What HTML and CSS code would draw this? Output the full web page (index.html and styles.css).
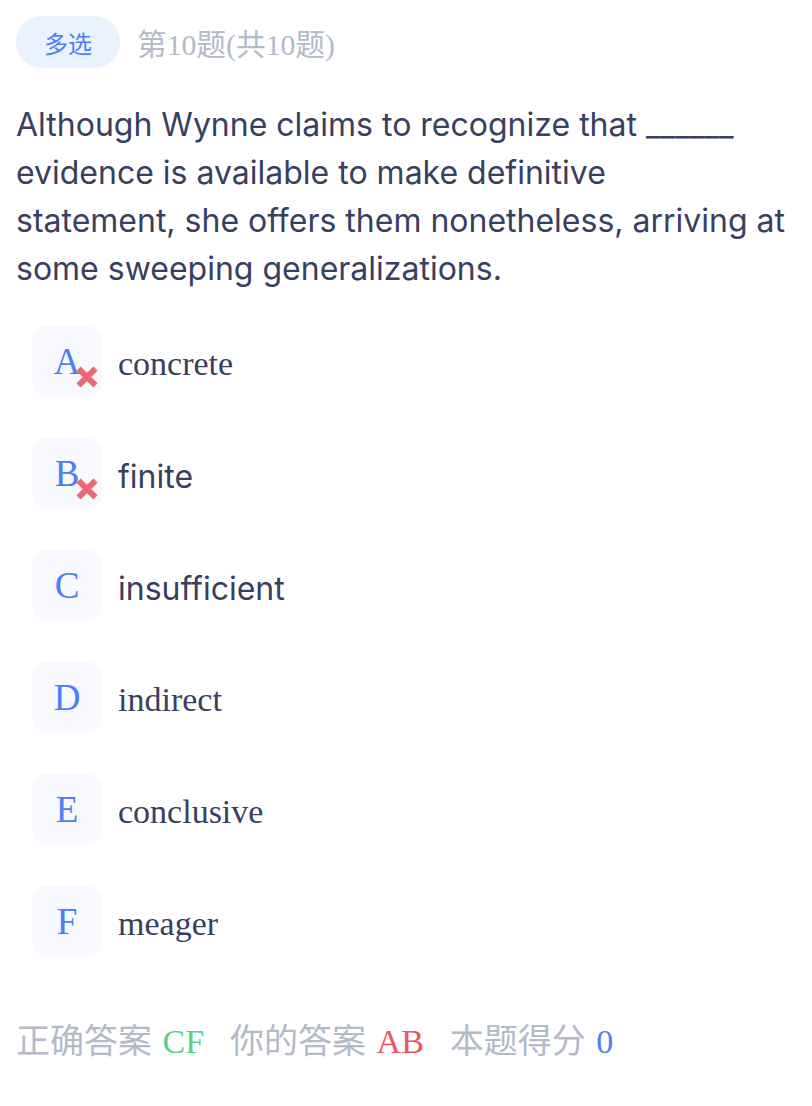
FILE: index.html
```html
<!DOCTYPE html>
<html lang="zh">
<head>
<meta charset="utf-8">
<link rel="stylesheet" href="styles.css">
</head>
<body>
<div class="page">
  <div class="header">
    <span class="tag">多选</span>
    <span class="progress">第10题(共10题)</span>
  </div>
  <p class="question">Although Wynne claims to recognize that ______ evidence is available to make definitive<br>statement, she offers them nonetheless, arriving at some sweeping generalizations.</p>
  <ul class="options">
    <li class="option">
      <span class="key">A<span class="wrong"></span></span>
      <span class="label serif">concrete</span>
    </li>
    <li class="option">
      <span class="key">B<span class="wrong"></span></span>
      <span class="label sans">finite</span>
    </li>
    <li class="option">
      <span class="key">C</span>
      <span class="label sans">insufficient</span>
    </li>
    <li class="option">
      <span class="key">D</span>
      <span class="label serif">indirect</span>
    </li>
    <li class="option">
      <span class="key">E</span>
      <span class="label serif">conclusive</span>
    </li>
    <li class="option">
      <span class="key">F</span>
      <span class="label serif">meager</span>
    </li>
  </ul>
  <div class="result">
    <span class="item">正确答案<b class="ok">CF</b></span>
    <span class="item">你的答案<b class="bad">AB</b></span>
    <span class="item">本题得分<b class="score">0</b></span>
  </div>
</div>
</body>
</html>
```
FILE: styles.css
```css
html, body {
  margin: 0;
  padding: 0;
  background: #ffffff;
}
.page {
  padding: 16px;
  font-family: "Liberation Serif", "Noto Sans CJK SC", serif;
}
.header {
  display: flex;
  align-items: center;
  gap: 17px;
  height: 52px;
}
.tag {
  display: flex;
  align-items: center;
  justify-content: center;
  width: 104px;
  height: 52px;
  border-radius: 26px;
  background: #ebf2ff;
  color: #4d7ef7;
  font-family: "Noto Sans CJK SC", sans-serif;
  font-size: 24px;
}
.progress {
  color: #b3bac8;
  font-size: 29.7px;
  font-family: "Liberation Serif", "Noto Sans CJK SC", serif;
}
.question {
  margin: 33px -16px 0 0;
  font-family: Inter, "Noto Sans CJK SC", sans-serif;
  font-size: 32px;
  line-height: 48px;
  color: #38405f;
}
.options {
  list-style: none;
  margin: 12px 0 0;
  padding: 0 0 0 16px;
}
.option {
  display: flex;
  align-items: center;
  gap: 16px;
  padding: 21px 0;
}
.key {
  position: relative;
  display: flex;
  align-items: center;
  justify-content: center;
  width: 70px;
  height: 70px;
  border-radius: 14px;
  background: #f7f9ff;
  color: #4d7ef7;
  font-family: "Liberation Serif", serif;
  font-size: 37px;
}
.wrong {
  position: absolute;
  right: 5px;
  bottom: 9px;
  width: 20px;
  height: 20px;
}
.wrong::before,
.wrong::after {
  content: "";
  position: absolute;
  left: -2px;
  top: 7px;
  width: 24px;
  height: 6px;
  background: #ee6677;
  transform: rotate(45deg);
}
.wrong::after {
  transform: rotate(-45deg);
}
.label {
  padding-top: 6px;
  color: #38405f;
  font-size: 32px;
}
.label.serif {
  font-family: "Liberation Serif", serif;
  font-size: 34px;
}
.label.sans {
  font-family: Inter, sans-serif;
}
.result {
  display: flex;
  gap: 26px;
  margin-top: 37px;
  font-size: 34px;
  color: #b3bac8;
  font-family: "Noto Sans CJK SC", sans-serif;
}
.result b {
  margin-left: 10.5px;
  font-weight: normal;
  font-family: "Liberation Serif", serif;
}
.ok { color: #5ccf8a; }
.bad { color: #ec5468; }
.score { color: #4d7ef7; }
```
